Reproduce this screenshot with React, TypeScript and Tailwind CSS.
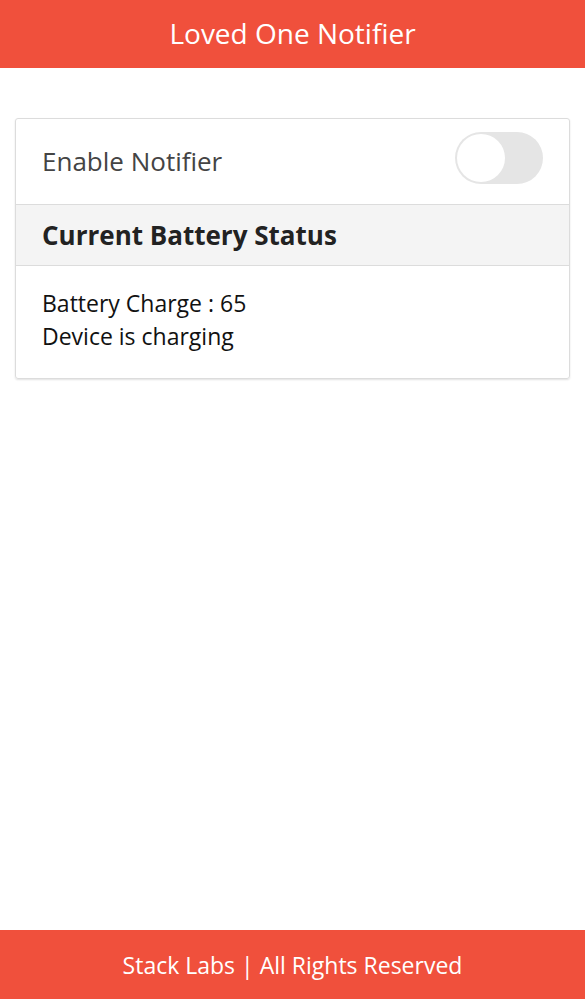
export default function App() {
  return (
    <div
      className="flex h-[999px] w-full flex-col bg-white"
      style={{ fontFamily: '"Open Sans", "Noto Sans", sans-serif' }}
    >
      <header className="flex h-[68px] shrink-0 items-center justify-center bg-[#f0503c] pb-[3px]">
        <h1 className="text-[28px] text-white">Loved One Notifier</h1>
      </header>

      <main className="flex-1 px-[15px] pt-[50px]">
        <section className="rounded-[3px] border border-[#dcdcdc] shadow-[0_1px_2px_rgba(0,0,0,0.12)]">
          <div className="flex h-[86px] items-center justify-between border-b border-[#dcdcdc] pl-[26px] pr-[26px]">
            <span className="text-[26px] text-[#444]">Enable Notifier</span>
            <button
              type="button"
              aria-label="Enable Notifier"
              className="mb-[7px] flex h-[52px] w-[88px] items-center rounded-full bg-[#e5e5e5] p-[2px]"
            >
              <span className="h-[48px] w-[48px] rounded-full bg-white" />
            </button>
          </div>
          <div className="flex h-[61px] items-center border-b border-[#dcdcdc] bg-[#f4f4f4] px-[26px]">
            <h2 className="text-[26px] font-bold text-[#222]">Current Battery Status</h2>
          </div>
          <div className="px-[26px] pb-[25px] pt-[21px] text-[23px] leading-[33px] text-[#111]">
            <p>Battery Charge : 65</p>
            <p>Device is charging</p>
          </div>
        </section>
      </main>

      <footer className="flex h-[69px] shrink-0 items-center justify-center bg-[#f0503c] pt-[2px]">
        <span className="text-[23px] text-white">Stack Labs | All Rights Reserved</span>
      </footer>
    </div>
  )
}
